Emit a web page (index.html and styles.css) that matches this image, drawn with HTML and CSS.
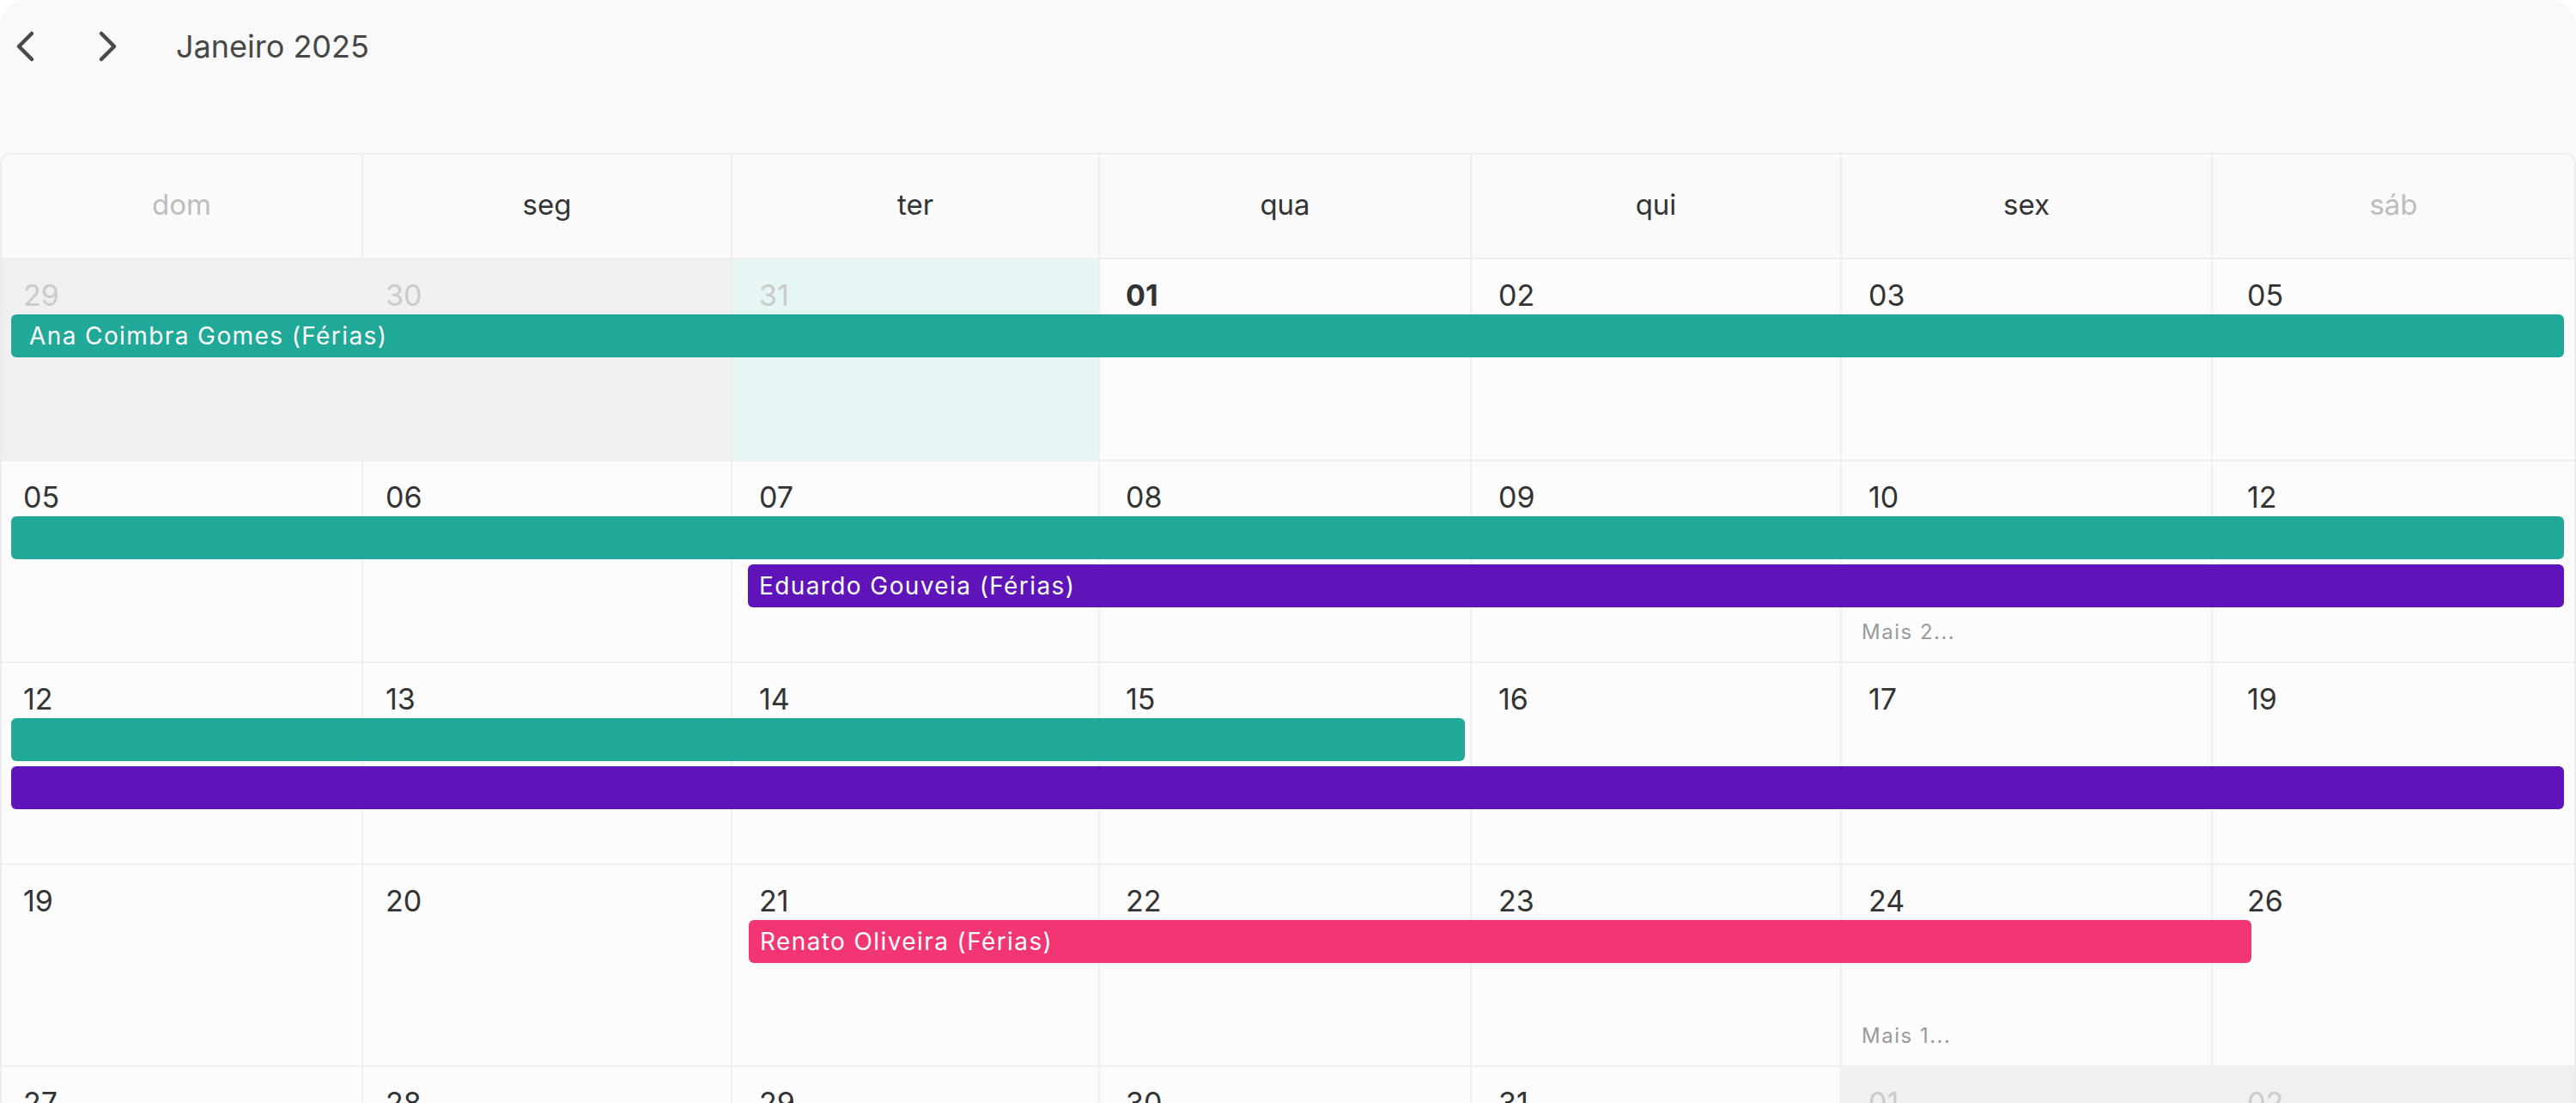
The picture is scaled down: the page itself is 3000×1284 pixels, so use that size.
FILE: index.html
```html
<!DOCTYPE html>
<html lang="pt">
<head>
<meta charset="utf-8">
<title>Calendário</title>
<link rel="stylesheet" href="styles.css">
</head>
<body>
<div class="page">
  <div class="toolbar">
    <button class="nav prev" aria-label="Anterior">
      <svg width="24" height="40" viewBox="0 0 24 40"><path d="M19 5 L4 20 L19 35" /></svg>
    </button>
    <button class="nav next" aria-label="Seguinte">
      <svg width="24" height="40" viewBox="0 0 24 40"><path d="M5 5 L20 20 L5 35" /></svg>
    </button>
    <h1 class="title">Janeiro 2025</h1>
  </div>

  <div class="calendar">
    <div class="head">
      <div class="hcell muted">dom</div>
      <div class="hcell">seg</div>
      <div class="hcell">ter</div>
      <div class="hcell">qua</div>
      <div class="hcell">qui</div>
      <div class="hcell">sex</div>
      <div class="hcell muted last">sáb</div>
    </div>

    <div class="week">
      <div class="day out"><span class="num">29</span></div>
      <div class="day out"><span class="num">30</span></div>
      <div class="day out today"><span class="num">31</span></div>
      <div class="day"><span class="num bold">01</span></div>
      <div class="day"><span class="num">02</span></div>
      <div class="day"><span class="num">03</span></div>
      <div class="day"><span class="num">05</span></div>
      <div class="bar teal lane1 c1-8 first">Ana Coimbra Gomes (Férias)</div>
    </div>

    <div class="week">
      <div class="day"><span class="num">05</span></div>
      <div class="day"><span class="num">06</span></div>
      <div class="day"><span class="num">07</span></div>
      <div class="day"><span class="num">08</span></div>
      <div class="day"><span class="num">09</span></div>
      <div class="day"><span class="num">10</span><span class="more">Mais 2...</span></div>
      <div class="day"><span class="num">12</span></div>
      <div class="bar teal lane1 c1-8"></div>
      <div class="bar purple lane2 c3-8">Eduardo Gouveia (Férias)</div>
    </div>

    <div class="week">
      <div class="day"><span class="num">12</span></div>
      <div class="day"><span class="num">13</span></div>
      <div class="day"><span class="num">14</span></div>
      <div class="day"><span class="num">15</span></div>
      <div class="day"><span class="num">16</span></div>
      <div class="day"><span class="num">17</span></div>
      <div class="day"><span class="num">19</span></div>
      <div class="bar teal lane1 c1-5"></div>
      <div class="bar purple lane2 c1-8"></div>
    </div>

    <div class="week">
      <div class="day"><span class="num">19</span></div>
      <div class="day"><span class="num">20</span></div>
      <div class="day"><span class="num">21</span></div>
      <div class="day"><span class="num">22</span></div>
      <div class="day"><span class="num">23</span></div>
      <div class="day"><span class="num">24</span><span class="more">Mais 1...</span></div>
      <div class="day"><span class="num">26</span></div>
      <div class="bar pink lane1 c3-7x">Renato Oliveira (Férias)</div>
    </div>

    <div class="week">
      <div class="day"><span class="num">27</span></div>
      <div class="day"><span class="num">28</span></div>
      <div class="day"><span class="num">29</span></div>
      <div class="day"><span class="num">30</span></div>
      <div class="day"><span class="num">31</span></div>
      <div class="day out"><span class="num">01</span></div>
      <div class="day out"><span class="num">02</span></div>
    </div>
  </div>
</div>
</body>
</html>
```

FILE: styles.css
```css
* { box-sizing: border-box; }

html, body {
  margin: 0;
  padding: 0;
  background: #ffffff;
}

body {
  font-family: "Inter", "Liberation Sans", sans-serif;
  color: #333333;
}

.page {
  width: 3000px;
  height: 1284px;
  background: #f9f9f9;
  border-radius: 30px 30px 0 0;
  overflow: hidden;
}

/* toolbar */
.toolbar {
  height: 108px;
  margin-bottom: 70px;
  display: flex;
  align-items: center;
  padding-left: 18px;
}

.nav {
  width: 24px;
  height: 40px;
  padding: 0;
  border: 0;
  background: transparent;
  display: flex;
}

.nav svg path {
  fill: none;
  stroke: #4a4a4a;
  stroke-width: 4.5;
  stroke-linecap: round;
  stroke-linejoin: round;
}

.nav.next { margin-left: 71px; }

.title {
  margin: 0 0 0 68px;
  font-size: 36px;
  font-weight: 400;
  color: #474747;
  line-height: 1;
}

/* calendar grid */
.calendar {
  border-top: 2px solid #ededed;
  border-left: 2px solid #ededed;
  border-right: 2px solid #ededed;
  border-radius: 12px 12px 0 0;
  overflow: hidden;
}

.head,
.week {
  display: grid;
  grid-template-columns: 421px 430px 428px 433px 431px 432px 421px;
}

.hcell {
  height: 122px;
  display: flex;
  align-items: center;
  justify-content: center;
  font-size: 33px;
  font-weight: 400;
  color: #333333;
  background: #fafafa;
  border-right: 2px solid #ededed;
  border-bottom: 2px solid #ededed;
  padding-bottom: 4px;
}

.hcell.last { border-right: 0; }
.hcell.muted { color: #bdbdbd; }

.week {
  height: 235px;
  grid-template-rows: 64px 50px 56px 1fr;
}

.day {
  grid-row: 1 / -1;
  background: #fcfcfc;
  border-right: 2px solid #efefef;
  border-bottom: 2px solid #efefef;
  padding: 25px 0 22px 28px;
  display: flex;
  flex-direction: column;
  justify-content: space-between;
  align-items: flex-start;
}

.day:nth-child(1) { grid-column: 1; padding-left: 25px; }
.day:nth-child(2) { grid-column: 2; padding-left: 26px; }
.day:nth-child(3) { grid-column: 3; padding-left: 31px; }
.day:nth-child(4) { grid-column: 4; padding-left: 30px; }
.day:nth-child(5) { grid-column: 5; padding-left: 31px; }
.day:nth-child(6) { grid-column: 6; padding-left: 31px; }
.day:nth-child(7) { grid-column: 7; padding-left: 40px; border-right: 0; }

.day.out { background: #f0f0f0; }
.day.out .num { color: #cbcbcb; }
.day.today { background: #e6f6f4; }

.num {
  font-size: 34px;
  line-height: 1;
  color: #333333;
}

.num.bold { font-weight: 700; }

.more {
  font-size: 24px;
  line-height: 1;
  letter-spacing: 1.5px;
  color: #9a9a9a;
  margin-left: -8px;
}

/* event bars */
.bar {
  position: relative;
  z-index: 1;
  height: 50px;
  border-radius: 6px;
  color: #ffffff;
  font-size: 28px;
  letter-spacing: 1.4px;
  line-height: 50px;
  padding-left: 13px;
  white-space: nowrap;
  overflow: hidden;
}

.bar.first { padding-left: 21px; }

.lane1 { grid-row: 2; }
.lane2 { grid-row: 3; margin-top: 6px; }

.teal { background: #20a998; }
.purple { background: #5e14b8; }
.pink { background: #f23674; }

.c1-8 { grid-column: 1 / 8; margin-left: 11px; margin-right: 12px; }
.c3-8 { grid-column: 3 / 8; margin-left: 18px; margin-right: 12px; }
.c1-5 { grid-column: 1 / 5; margin-left: 11px; margin-right: 8px; }
.c3-7x { grid-column: 3 / 8; margin-left: 19px; margin-right: 376px; }
```
